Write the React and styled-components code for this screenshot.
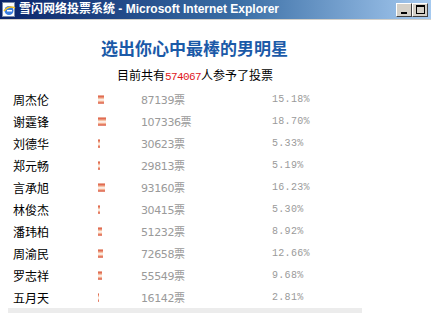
import React from 'react';
import styled, { createGlobalStyle } from 'styled-components';

const GlobalStyle = createGlobalStyle`
  html, body {
    margin: 0;
    padding: 0;
    background: #ffffff;
  }
  body {
    width: 431px;
    height: 313px;
    overflow: hidden;
    font-family: "Noto Sans CJK SC", "Liberation Sans", sans-serif;
  }
`;

const Window = styled.div`
  width: 431px;
  height: 313px;
  display: flex;
  flex-direction: column;
  background: #fff;
`;

const TitleBar = styled.div`
  height: 19px;
  display: flex;
  align-items: center;
  padding: 0 3px 0 2px;
  background: linear-gradient(to right, #0a246a 0%, #3a6ea5 55%, #a6caf0 100%);
  border-bottom: 1px solid #d4d0c8;
`;

const TitleText = styled.span`
  flex: 1;
  margin-left: 3px;
  color: #fff;
  font-weight: bold;
  font-size: 12px;
  line-height: 19px;
  white-space: nowrap;
  font-family: "Liberation Sans", "Noto Sans CJK SC", sans-serif;
`;

const WinButtons = styled.div`
  display: flex;
`;

const WinButton = styled.div`
  width: 16px;
  height: 14px;
  box-sizing: border-box;
  background: #d4d0c8;
  border: 1px solid;
  border-color: #fff #404040 #404040 #fff;
  display: flex;
  align-items: center;
  justify-content: center;
`;

const Content = styled.div`
  flex: 1;
  display: flex;
  flex-direction: column;
`;

const Heading = styled.h1`
  margin: 17px 0 0 101px;
  font-size: 17px;
  line-height: 22px;
  font-weight: bold;
  color: #1b5aa8;
`;

const Summary = styled.div`
  margin: 8px 0 0 117px;
  font-size: 12px;
  line-height: 16px;
  color: #000;
`;

const Count = styled.span`
  color: #e0161b;
  font-family: "Liberation Mono", monospace;
  font-size: 11px;
  letter-spacing: -0.6px;
`;

const Table = styled.div`
  margin-top: 3px;
  display: flex;
  flex-direction: column;
`;

const Row = styled.div`
  display: grid;
  grid-template-columns: 85px 43px 131px auto;
  align-items: center;
  height: 22px;
  padding-left: 13px;
`;

const Name = styled.span`
  font-size: 12px;
  color: #000;
`;

const Bar = styled.span`
  display: block;
  height: 9px;
  background: linear-gradient(
    to bottom,
    #f0c8b8 0%,
    #e0644a 18%,
    #f6c8ac 40%,
    #ffffff 55%,
    #f4b496 72%,
    #dc5a44 90%,
    #f0c8b8 100%
  );
`;

const Votes = styled.span`
  font-size: 11px;
  color: #9a9a9a;
  font-family: "DejaVu Sans", "Noto Sans CJK SC", sans-serif;
  letter-spacing: -0.4px;
`;

const Percent = styled.span`
  font-size: 10px;
  color: #9a9a9a;
  font-family: "Liberation Mono", monospace;
  letter-spacing: 0.3px;
`;

const BottomRule = styled.div`
  margin: auto 0 0 8px;
  width: 354px;
  height: 5px;
  background: #ececec;
`;

const IeIcon = () => (
  <svg width="14" height="15" viewBox="0 0 14 15">
    <rect x="0.5" y="0.5" width="12" height="14" fill="#fff" stroke="#7a8ca8" />
    <circle cx="7" cy="8.5" r="4.5" fill="#3a7ee0" />
    <path d="M2 9 Q7 3 13 6" stroke="#f5c020" strokeWidth="1.6" fill="none" />
    <rect x="5" y="8" width="5" height="1.5" fill="#fff" />
  </svg>
);

const candidates = [
  ['周杰伦', 87139, '15.18'],
  ['谢霆锋', 107336, '18.70'],
  ['刘德华', 30623, '5.33'],
  ['郑元畅', 29813, '5.19'],
  ['言承旭', 93160, '16.23'],
  ['林俊杰', 30415, '5.30'],
  ['潘玮柏', 51232, '8.92'],
  ['周渝民', 72658, '12.66'],
  ['罗志祥', 55549, '9.68'],
  ['五月天', 16142, '2.81'],
];

const App = () => (
  <Window>
    <GlobalStyle />
    <TitleBar>
      <IeIcon />
      <TitleText>雪闪网络投票系统 - Microsoft Internet Explorer</TitleText>
      <WinButtons>
        <WinButton>
          <svg width="8" height="8" viewBox="0 0 8 8">
            <rect x="1" y="6" width="6" height="2" fill="#000" />
          </svg>
        </WinButton>
        <WinButton>
          <svg width="9" height="9" viewBox="0 0 9 9">
            <rect x="0.5" y="0.5" width="8" height="8" fill="none" stroke="#000" />
            <rect x="0" y="0" width="9" height="2" fill="#000" />
          </svg>
        </WinButton>
      </WinButtons>
    </TitleBar>
    <Content>
      <Heading>选出你心中最棒的男明星</Heading>
      <Summary>
        目前共有<Count>574067</Count>人参予了投票
      </Summary>
      <Table>
        {candidates.map(([name, votes, pct]) => (
          <Row key={name}>
            <Name>{name}</Name>
            <span>
              <Bar style={{ width: Math.max(1, Math.round(parseFloat(pct) * 0.42)) + 'px' }} />
            </span>
            <Votes>{votes}票</Votes>
            <Percent>{pct}%</Percent>
          </Row>
        ))}
      </Table>
      <BottomRule />
    </Content>
  </Window>
);

export default App;
